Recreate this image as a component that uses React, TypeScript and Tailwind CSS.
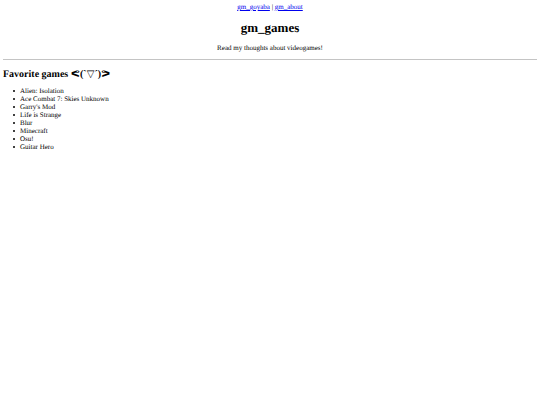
import React from 'react';

const links = [
  { label: 'gm_goyaba', href: '#goyaba' },
  { label: 'gm_about', href: '#about' },
];

const games = [
  'Alien: Isolation',
  'Ace Combat 7: Skies Unknown',
  "Garry's Mod",
  'Life is Strange',
  'Blur',
  'Minecraft',
  'Osu!',
  'Guitar Hero',
];

const App: React.FC = () => {
  return (
    <div className="px-[3px] pt-[3px] font-['Liberation_Serif','DejaVu_Sans',serif] text-[7px] leading-[8px] text-black [text-rendering:geometricPrecision]">
      <header className="text-center">
        <nav>
          {links.map((link, index) => (
            <React.Fragment key={link.href}>
              {index > 0 && ' | '}
              <a href={link.href} className="text-[#0000ee] underline">
                {link.label}
              </a>
            </React.Fragment>
          ))}
        </nav>
        <h1 className="mt-[9px] text-[13px] leading-[16px] font-bold">gm_games</h1>
        <p className="mt-2">Read my thoughts about videogames!</p>
      </header>

      <hr className="mt-[7px] border-t border-[#c4c4c4]" />

      <main>
        <h2 className="mt-[9px] text-[10px] leading-[12px] font-bold">Favorite games ᕙ(`▽´)ᕗ</h2>
        <ul className="mt-[6px] pl-[10px]">
          {games.map((game) => (
            <li
              key={game}
              className="flex items-center gap-[5px] before:size-[2px] before:rounded-full before:bg-black"
            >
              {game}
            </li>
          ))}
        </ul>
      </main>
    </div>
  );
};

export default App;
